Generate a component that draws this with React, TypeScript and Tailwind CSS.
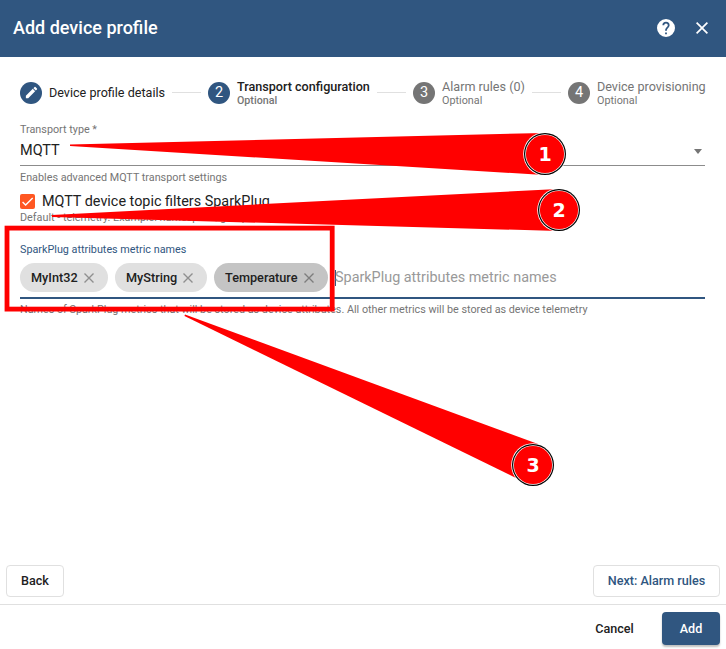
import React from "react";

function Step({ n, label, optional, active, done, gapLine, labelWidth }: {
  n?: string; label: string; optional?: boolean; active?: boolean; done?: boolean; gapLine?: boolean; labelWidth: string;
}) {
  return (
    <>
      <div className="flex h-full shrink-0 items-center">
        <div className={`flex h-[22px] w-[22px] shrink-0 items-center justify-center rounded-full text-[14.5px] text-white ${active || done ? "bg-[#305680]" : "bg-[#757575]"}`}>
          {done ? (
            <svg viewBox="0 0 24 24" className="h-[15px] w-[15px] fill-white">
              <path d="M3 17.25V21h3.75L17.81 9.94l-3.75-3.75L3 17.25zM20.71 7.04a1 1 0 0 0 0-1.41l-2.34-2.34a1 1 0 0 0-1.41 0l-1.83 1.83 3.75 3.75 1.83-1.83z" />
            </svg>
          ) : n}
        </div>
        <div className={`ml-[7px] whitespace-nowrap text-[12.6px] leading-[15px] ${labelWidth} ${active ? "font-medium text-[#212121]" : done ? "text-[#212121]" : "text-[#757575]"}`}>
          <div>{label}</div>
          {optional && <div className={`leading-[13px] text-[#757575] ${active ? "text-[10.7px] font-medium" : "text-[10.8px]"}`}>Optional</div>}
        </div>
      </div>
      {gapLine && <div className="mx-[7px] h-px w-[29px] shrink-0 bg-[#e0e0e0]" />}
    </>
  );
}

function Chip({ text, width, focused }: { text: string; width: string; focused?: boolean }) {
  return (
    <div className={`flex h-[29px] items-center justify-between rounded-full pl-[11px] pr-[14px] text-[12.7px] font-medium text-[#212121] ${width} ${focused ? "bg-[#c4c4c4]" : "bg-[#e0e0e0]"}`}>
      <span>{text}</span>
      <svg viewBox="0 0 10 10" className={`h-[10px] w-[10px] ${focused ? "stroke-[#7d7d7d]" : "stroke-[#8f8f8f]"}`} strokeWidth="1.4">
        <path d="M.5.5l9 9M9.5.5l-9 9" />
      </svg>
    </div>
  );
}

function Marker({ x, y, label }: { x: number; y: number; label: string }) {
  return (
    <g>
      <circle cx={x} cy={y} r="21.8" fill="#fff" />
      <circle cx={x} cy={y} r="21" fill="#000" />
      <circle cx={x} cy={y} r="19.8" fill="#fff" />
      <circle cx={x} cy={y} r="19.1" fill="#f00" />
      <text x={x} y={y + 7} textAnchor="middle" className="fill-white font-['DejaVu_Sans',sans-serif] text-[19px] font-bold">{label}</text>
    </g>
  );
}

export default function App() {
  return (
    <div className="relative flex h-[649px] w-[726px] flex-col overflow-hidden bg-white font-[Roboto,sans-serif] text-[#212121]">
      <header className="flex h-[57px] shrink-0 items-center justify-between bg-[#305680] pb-[1px] pl-[13px] pr-[18px] text-white">
        <h1 className="pb-[2px] text-[18px] font-medium">Add device profile</h1>
        <div className="flex items-center gap-[21px]">
          <svg viewBox="2 2 20 20" className="h-[18px] w-[18px] fill-white">
            <path d="M12 2a10 10 0 1 0 0 20 10 10 0 0 0 0-20zm1 17h-2v-2h2v2zm2.07-7.75-.9.92C13.45 12.9 13 13.5 13 15h-2v-.5c0-1.1.45-2.1 1.17-2.83l1.24-1.26c.37-.36.59-.86.59-1.41a2 2 0 0 0-4 0H8a4 4 0 0 1 8 0c0 .88-.36 1.68-.93 2.25z" />
          </svg>
          <svg viewBox="5 5 14 14" className="h-[12px] w-[12px] fill-white">
            <path d="M19 6.41 17.59 5 12 10.59 6.41 5 5 6.41 10.59 12 5 17.59 6.41 19 12 13.41 17.59 19 19 17.59 13.41 12z" />
          </svg>
        </div>
      </header>

      <nav className="flex h-[71px] shrink-0 items-center pl-[20px]">
        <Step done label="Device profile details" gapLine labelWidth="w-[116px]" />
        <Step n="2" active optional label="Transport configuration" gapLine labelWidth="w-[133px]" />
        <Step n="3" optional label="Alarm rules (0)" gapLine labelWidth="w-[83px]" />
        <Step n="4" optional label="Device provisioning" labelWidth="w-[110px]" />
      </nav>

      <main className="flex flex-1 flex-col pl-[20px] pr-[21px]">
        <div className="mt-[-5px] text-[10.8px] leading-[13px] text-[#757575]">Transport type *</div>
        <div className="flex h-[30px] items-center justify-between border-b border-[#8c8c8c] pr-[3px] text-[14.5px]">
          <span>MQTT</span>
          <span className="mt-[1px] border-x-[4.5px] border-t-[5px] border-x-transparent border-t-[#757575]" />
        </div>
        <div className="mt-[5px] text-[10.8px] leading-[13px] text-[#757575]">Enables advanced MQTT transport settings</div>
        <div className="mt-[8px] flex h-[18px] items-center">
          <span className="flex h-[15px] w-[15px] items-center justify-center rounded-[2px] bg-[#ff5722]">
            <svg viewBox="0 0 24 24" className="h-[15px] w-[15px] fill-none stroke-white" strokeWidth="2.2"><path d="M4.1 12.7 9 17.6 20.3 6.3" /></svg>
          </span>
          <span className="ml-[7px] whitespace-nowrap pt-[2px] text-[14.4px] leading-[18px]">MQTT device topic filters SparkPlug</span>
        </div>
        <div className="mt-[1px] text-[10.8px] leading-[13px] text-[#757575]">Default - telemetry. Example: namespace/group_id</div>
        <div className="mt-[19px] text-[10.8px] leading-[13px] text-[#305680]">SparkPlug attributes metric names</div>
        <div className="mt-[7px] flex h-[36px] items-start border-b-2 border-[#305680]">
          <div className="flex gap-[7px]">
            <Chip text="MyInt32" width="w-[88px]" />
            <Chip text="MyString" width="w-[92px]" />
            <Chip text="Temperature" width="w-[114px]" focused />
          </div>
          <div className="ml-[7px] flex h-[29px] items-center">
            <span className="h-[16px] w-px bg-[#305680]" />
            <span className="ml-[-1px] whitespace-nowrap pt-[1px] text-[14.4px] leading-[18px] text-[#999]">SparkPlug attributes metric names</span>
          </div>
        </div>
        <div className="mt-[4px] whitespace-nowrap text-[10.79px] leading-[13px] text-[#757575]">Names of SparkPlug metrics that will be stored as device attributes. All other metrics will be stored as device telemetry</div>
      </main>

      <div className="flex h-[39px] shrink-0 items-start justify-between px-[6px] text-[12.6px] font-medium">
        <button className="h-[32px] w-[58px] rounded-[4px] border border-[#e0e0e0]">Back</button>
        <button className="h-[32px] w-[127px] rounded-[4px] border border-[#e0e0e0] text-[#305680]">Next: Alarm rules</button>
      </div>
      <footer className="flex h-[45px] shrink-0 items-start justify-end border-t border-[#e0e0e0] pr-[6px] pt-[7px] text-[12.6px] font-medium">
        <button className="mr-[14px] h-[33px] w-[67px] pt-[1px]">Cancel</button>
        <button className="h-[33px] w-[58px] rounded-[4px] bg-[#305680] pt-[1px] text-white shadow-[0_2px_2px_rgba(0,0,0,0.25)]">Add</button>
      </footer>

      <svg viewBox="0 0 726 649" className="pointer-events-none absolute inset-0 h-full w-full">
        <rect x="7" y="228.1" width="325.2" height="81" fill="none" stroke="#f00" strokeWidth="4.8" />
        <polygon points="70,144.5 544,133 544,175 70,146" fill="#f00" />
        <polygon points="52,215 558,189 558,231 52,217" fill="#f00" />
        <polygon points="185,314.5 538,444 516,478 184.5,316" fill="#f00" />
        <Marker x={545} y={154} label="1" />
        <Marker x={559} y={210} label="2" />
        <Marker x={533} y={465} label="3" />
      </svg>
    </div>
  );
}
